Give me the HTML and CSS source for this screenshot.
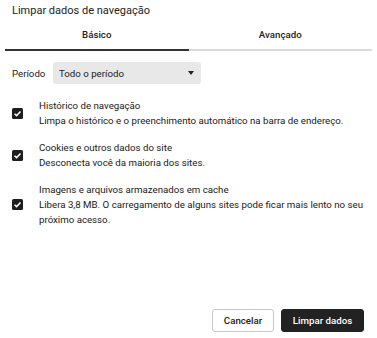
FILE: index.html
```html
<!DOCTYPE html>
<html lang="pt">
<head>
    <meta charset="UTF-8">
    <title>Limpar dados de navegação</title>
    <link rel="stylesheet" href="styles.css">
</head>
<body>
    <div class="dialog">
        <h1 class="dialog-title">Limpar dados de navegação</h1>

        <!-- abas -->
        <div class="tabs">
            <div class="tab active">Básico</div>
            <div class="tab">Avançado</div>
        </div>

        <!-- período -->
        <div class="period-row">
            <span class="period-label">Período</span>
            <div class="select">
                <span>Todo o período</span>
                <span class="select-arrow"></span>
            </div>
        </div>

        <!-- opções -->
        <div class="options">
            <div class="option">
                <span class="checkbox"><svg viewBox="0 0 12 12"><path d="M2.8 6.2 L5 8.3 L9.3 3.9" /></svg></span>
                <div class="option-text">
                    <div>Histórico de navegação</div>
                    <div>Limpa o histórico e o preenchimento automático na barra de endereço.</div>
                </div>
            </div>
            <div class="option">
                <span class="checkbox"><svg viewBox="0 0 12 12"><path d="M2.8 6.2 L5 8.3 L9.3 3.9" /></svg></span>
                <div class="option-text">
                    <div>Cookies e outros dados do site</div>
                    <div>Desconecta você da maioria dos sites.</div>
                </div>
            </div>
            <div class="option">
                <span class="checkbox"><svg viewBox="0 0 12 12"><path d="M2.8 6.2 L5 8.3 L9.3 3.9" /></svg></span>
                <div class="option-text">
                    <div>Imagens e arquivos armazenados em cache</div>
                    <div>Libera 3,8 MB. O carregamento de alguns sites pode ficar mais lento no seu próximo acesso.</div>
                </div>
            </div>
        </div>

        <!-- botões -->
        <div class="actions">
            <button class="btn btn-cancel">Cancelar</button>
            <button class="btn btn-confirm">Limpar dados</button>
        </div>
    </div>
</body>
</html>
```

FILE: styles.css
```css
* {
    margin: 0;
    padding: 0;
    box-sizing: border-box;
}

body {
    font-family: Roboto, 'Liberation Sans', sans-serif;
    background: #fff;
    color: #202020;
}

.dialog {
    width: 377px;
    height: 338px;
    display: flex;
    flex-direction: column;
}

.dialog-title {
    font-size: 11px;
    font-weight: 400;
    line-height: 16px;
    padding: 3px 12px 0;
    color: #222;
}

/* abas */
.tabs {
    display: flex;
    margin: 2px 5px 0;
}

.tab {
    flex: 1;
    text-align: center;
    font-size: 9.7px;
    font-weight: 500;
    height: 30px;
    line-height: 28px;
    border-bottom: 2px solid #dadada;
    color: #222;
}

.tab.active {
    border-bottom-color: #333;
}

/* período */
.period-row {
    display: flex;
    align-items: center;
    margin: 11px 0 0 12px;
    font-size: 9.7px;
}

.period-label {
    width: 41px;
}

.select {
    width: 148px;
    height: 22px;
    background: #e8e8e8;
    border-radius: 3px;
    display: flex;
    align-items: center;
    justify-content: space-between;
    padding: 0 7px 0 6px;
}

.select-arrow {
    width: 0;
    height: 0;
    border-left: 3.5px solid transparent;
    border-right: 3.5px solid transparent;
    border-top: 4px solid #222;
}

/* opções */
.options {
    margin-top: 14px;
}

.option {
    display: flex;
    align-items: center;
    padding: 0 10px 0 12px;
    margin-bottom: 12px;
}

.checkbox {
    flex: none;
    width: 11px;
    height: 11px;
    background: #1e1e1e;
    border-radius: 1.5px;
    margin-right: 16px;
    display: flex;
}

.checkbox svg {
    width: 11px;
    height: 11px;
    fill: none;
    stroke: #fff;
    stroke-width: 1.6;
}

.option-text {
    font-size: 9.7px;
    line-height: 15px;
}

/* botões */
.actions {
    margin-top: auto;
    display: flex;
    justify-content: flex-end;
    gap: 7px;
    padding: 0 13px 6px 0;
}

.btn {
    height: 23px;
    font-family: inherit;
    font-size: 9.7px;
    font-weight: 500;
    border-radius: 3px;
    padding: 0;
    white-space: nowrap;
}

.btn-cancel {
    width: 62px;
    background: #fff;
    border: 1px solid #c8c8c8;
    color: #222;
}

.btn-confirm {
    width: 83px;
    background: #222;
    border: 1px solid #222;
    color: #fff;
}
```
